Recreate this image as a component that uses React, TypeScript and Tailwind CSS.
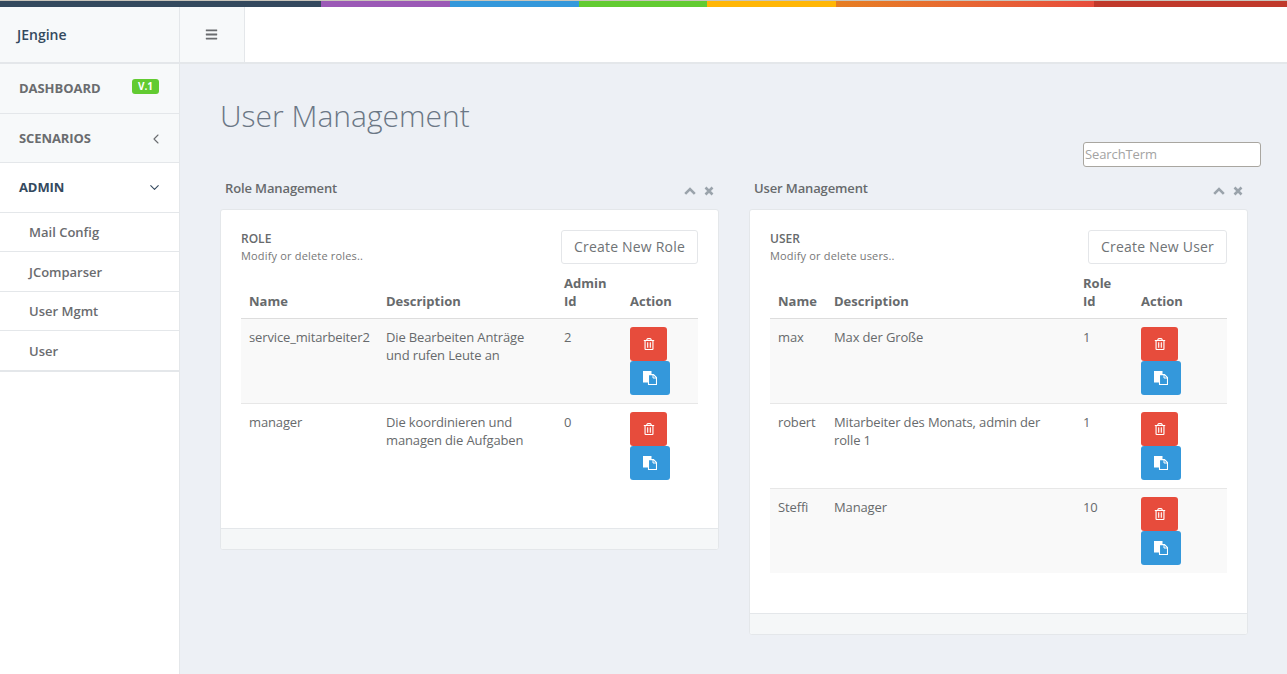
import React from 'react';
import { FaBars, FaRegTrashAlt } from 'react-icons/fa';
import { ChevronLeft, ChevronDown } from 'lucide-react';

type Row = { name: string; description: string[]; id: string; shaded: boolean };

const roles: Row[] = [
  { name: 'service_mitarbeiter2', description: ['Die Bearbeiten Anträge', 'und rufen Leute an'], id: '2', shaded: true },
  { name: 'manager', description: ['Die koordinieren und', 'managen die Aufgaben'], id: '0', shaded: false },
];

const users: Row[] = [
  { name: 'max', description: ['Max der Große'], id: '1', shaded: true },
  { name: 'robert', description: ['Mitarbeiter des Monats, admin der', 'rolle 1'], id: '1', shaded: false },
  { name: 'Steffi', description: ['Manager'], id: '10', shaded: true },
];

function CopyIcon() {
  return (
    <svg width="14" height="14" viewBox="0 0 14 14" fill="none">
      <rect x="0" y="0" width="8.5" height="11.5" fill="white" />
      <path d="M5.5 3.6h5l3 3v6.9h-8z" fill="#3498db" stroke="white" strokeWidth="1.1" />
      <path d="M10 3.6v3.4h3.5" stroke="white" strokeWidth="1" />
    </svg>
  );
}

function PanelTools() {
  return (
    <span className="flex items-center gap-[8px] mt-[5px]">
      <svg width="12" height="8" viewBox="0 0 12 8" fill="none">
        <path d="M1.2 6.8 6 2l4.8 4.8" stroke="#9aa3ab" strokeWidth="2.6" />
      </svg>
      <svg width="10" height="10" viewBox="0 0 10 10" fill="none">
        <path d="M1.5 1.5l7 7M8.5 1.5l-7 7" stroke="#9aa3ab" strokeWidth="2.6" />
      </svg>
    </span>
  );
}

function Actions() {
  return (
    <div className="flex flex-col items-start">
      <button className="w-[37px] h-[34px] rounded-[3px] bg-[#e74c3c] text-white flex items-center justify-center text-[12px]">
        <FaRegTrashAlt />
      </button>
      <button className="w-[40px] h-[34px] rounded-[3px] bg-[#3498db] text-white flex items-center justify-center">
        <CopyIcon />
      </button>
    </div>
  );
}

function Panel(props: {
  title: string;
  heading: string;
  hint: string;
  button: string;
  idHead: string[];
  rows: Row[];
  cols: string[];
  tableHeight: string;
}) {
  return (
    <div className="w-[499px]">
      <div className="h-[42px] pl-[5px] pr-[5px] flex items-center justify-between">
        <span className="mt-[2px] text-[13px] font-semibold tracking-[-0.13px] text-[#676a6c]">{props.title}</span>
        <PanelTools />
      </div>
      <div className="bg-white border border-[#e4e7ea] rounded-[3px] overflow-hidden">
        <div className={`px-[20px] pt-[20px] ${props.tableHeight}`}>
          <div className="flex justify-between items-start">
            <div>
              <div className="text-[12px] font-semibold leading-[17px] text-[#676a6c]">{props.heading}</div>
              <div className="text-[11px] leading-[18px] tracking-[0.17px] text-[#777]">{props.hint}</div>
            </div>
            <button className="h-[34px] px-[12px] pb-[2px] border border-[#e4e6e9] rounded-[3px] bg-white text-[14px] tracking-[0.2px] text-[#6f7376]">
              {props.button}
            </button>
          </div>
          <table className="w-full table-fixed text-[13px] text-[#676a6c] mt-[9px]">
            <colgroup>
              {props.cols.map((c) => (
                <col key={c} className={c} />
              ))}
            </colgroup>
            <thead>
              <tr className="border-b border-[#ddd]">
                <th className="text-left font-bold px-[8px] pb-[8px] leading-[18px] align-bottom">Name</th>
                <th className="text-left font-bold px-[8px] pb-[8px] leading-[18px] align-bottom">Description</th>
                <th className="text-left font-bold px-[8px] pb-[8px] leading-[18px] align-bottom">
                  {props.idHead.map((t) => (
                    <div key={t}>{t}</div>
                  ))}
                </th>
                <th className="text-left font-bold px-[8px] pb-[8px] leading-[18px] align-bottom">Action</th>
              </tr>
            </thead>
            <tbody className="tracking-[-0.14px]">
              {props.rows.map((r) => (
                <tr key={r.name} className={`${r.shaded ? 'bg-[#f9f9f9]' : ''} border-b border-[#e7e7e7] last:border-0`}>
                  <td className="align-top px-[8px] pt-[9px] leading-[18px]">{r.name}</td>
                  <td className="align-top px-[8px] pt-[9px] leading-[18px]">
                    {r.description.map((d) => (
                      <div key={d}>{d}</div>
                    ))}
                  </td>
                  <td className="align-top px-[8px] pt-[9px] leading-[18px]">{r.id}</td>
                  <td className="align-top px-[8px] pt-[8px] pb-[8px]">
                    <Actions />
                  </td>
                </tr>
              ))}
            </tbody>
          </table>
        </div>
        <div className="h-[21px] bg-[#f5f7f8] border-t border-[#e4e7ea]" />
      </div>
    </div>
  );
}

export default function App() {
  return (
    <div className="h-[674px] w-[1287px] overflow-hidden flex flex-col font-['Open_Sans',sans-serif] bg-white">
      {/* Colour strip */}
      <div className="h-[7px] border-t border-[#c9c5bb] flex shrink-0">
        <div className="w-[321px] bg-[#34495e]" />
        <div className="w-[129px] bg-[#9b59b6]" />
        <div className="w-[129px] bg-[#3498db]" />
        <div className="w-[128px] bg-[#62cb31]" />
        <div className="w-[129px] bg-[#ffb606]" />
        <div className="w-[258px] bg-gradient-to-r from-[#e67e22] to-[#e74c3c]" />
        <div className="flex-1 bg-[#c0392b]" />
      </div>

      {/* Header */}
      <div className="h-[57px] flex shrink-0 border-b-2 border-[#e4e7ea]">
        <div className="w-[180px] bg-[#f7f9fa] border-r border-[#e4e7ea] flex items-center pl-[17px] text-[14px] font-semibold text-[#34495e]">
          JEngine
        </div>
        <div className="w-[65px] bg-[#f7f9fa] border-r border-[#e4e7ea] flex items-center justify-center pr-[1px] text-[#6a6c6f] text-[13px]">
          <FaBars />
        </div>
        <div className="flex-1 bg-white" />
      </div>

      <div className="flex flex-1 min-h-0">
        {/* Sidebar */}
        <aside className="w-[180px] shrink-0 bg-white border-r border-[#e4e7ea] text-[#6a6c6f]">
          <div className="h-[50px] bg-[#f7f9fa] border-b border-[#e4e7ea] flex items-center justify-between pl-[19px] pr-[20px] text-[13px] tracking-[-0.05px] font-bold">
            <span>DASHBOARD</span>
            <span className="h-[15px] w-[27px] mb-[4px] rounded-[3px] bg-[#62cb31] text-white text-[10px] tracking-normal leading-[15px] text-center">V.1</span>
          </div>
          <div className="h-[49px] pt-[1px] bg-[#f7f9fa] border-b border-[#e4e7ea] flex items-center justify-between pl-[19px] pr-[15px] text-[13px] tracking-[-0.1px] font-bold">
            <span>SCENARIOS</span>
            <ChevronLeft size={16} strokeWidth={1.6} />
          </div>
          <div className="h-[50px] border-b border-[#e4e7ea] flex items-center justify-between pl-[19px] pr-[17px] text-[13px] tracking-[-0.1px] font-bold text-[#34495e]">
            <span>ADMIN</span>
            <ChevronDown size={15} strokeWidth={1.7} />
          </div>
          <div className="h-[39px] pt-[1px] border-b border-[#e4e7ea] flex items-center pl-[29px] text-[13px] font-semibold">Mail Config</div>
          <div className="h-[40px] pt-[2px] border-b border-[#e4e7ea] flex items-center pl-[29px] text-[13px] font-semibold">JComparser</div>
          <div className="h-[39px] pt-[1px] border-b border-[#e4e7ea] flex items-center pl-[29px] text-[13px] font-semibold">User Mgmt</div>
          <div className="h-[41px] pt-[2px] border-b-2 border-[#e4e7ea] flex items-center pl-[29px] text-[13px] font-semibold">User</div>
        </aside>

        {/* Content */}
        <main className="flex-1 bg-[#edf0f5] pl-[40px]">
          <h1 className="text-[30px] font-light leading-[36px] text-[#6b7785] mt-[34px]">User Management</h1>
          <div className="flex justify-end pr-[26px] mt-[8px]">
            <input
              placeholder="SearchTerm"
              className="w-[178px] h-[25px] px-[1px] pb-[2px] bg-white border border-[#a9a6a0] rounded-[3px] text-[13px] tracking-[-0.1px] placeholder:text-[#a3a3a3] outline-none"
            />
          </div>
          <div className="flex items-start gap-[30px]">
            <Panel
              title="Role Management"
              heading="ROLE"
              hint="Modify or delete roles.."
              button="Create New Role"
              idHead={['Admin', 'Id']}
              rows={roles}
              cols={['w-[137px]', 'w-[178px]', 'w-[66px]', 'w-[76px]']}
              tableHeight="h-[318px]"
            />
            <Panel
              title="User Management"
              heading="USER"
              hint="Modify or delete users.."
              button="Create New User"
              idHead={['Role', 'Id']}
              rows={users}
              cols={['w-[56px]', 'w-[249px]', 'w-[58px]', 'w-[94px]']}
              tableHeight="h-[403px]"
            />
          </div>
        </main>
      </div>
    </div>
  );
}
